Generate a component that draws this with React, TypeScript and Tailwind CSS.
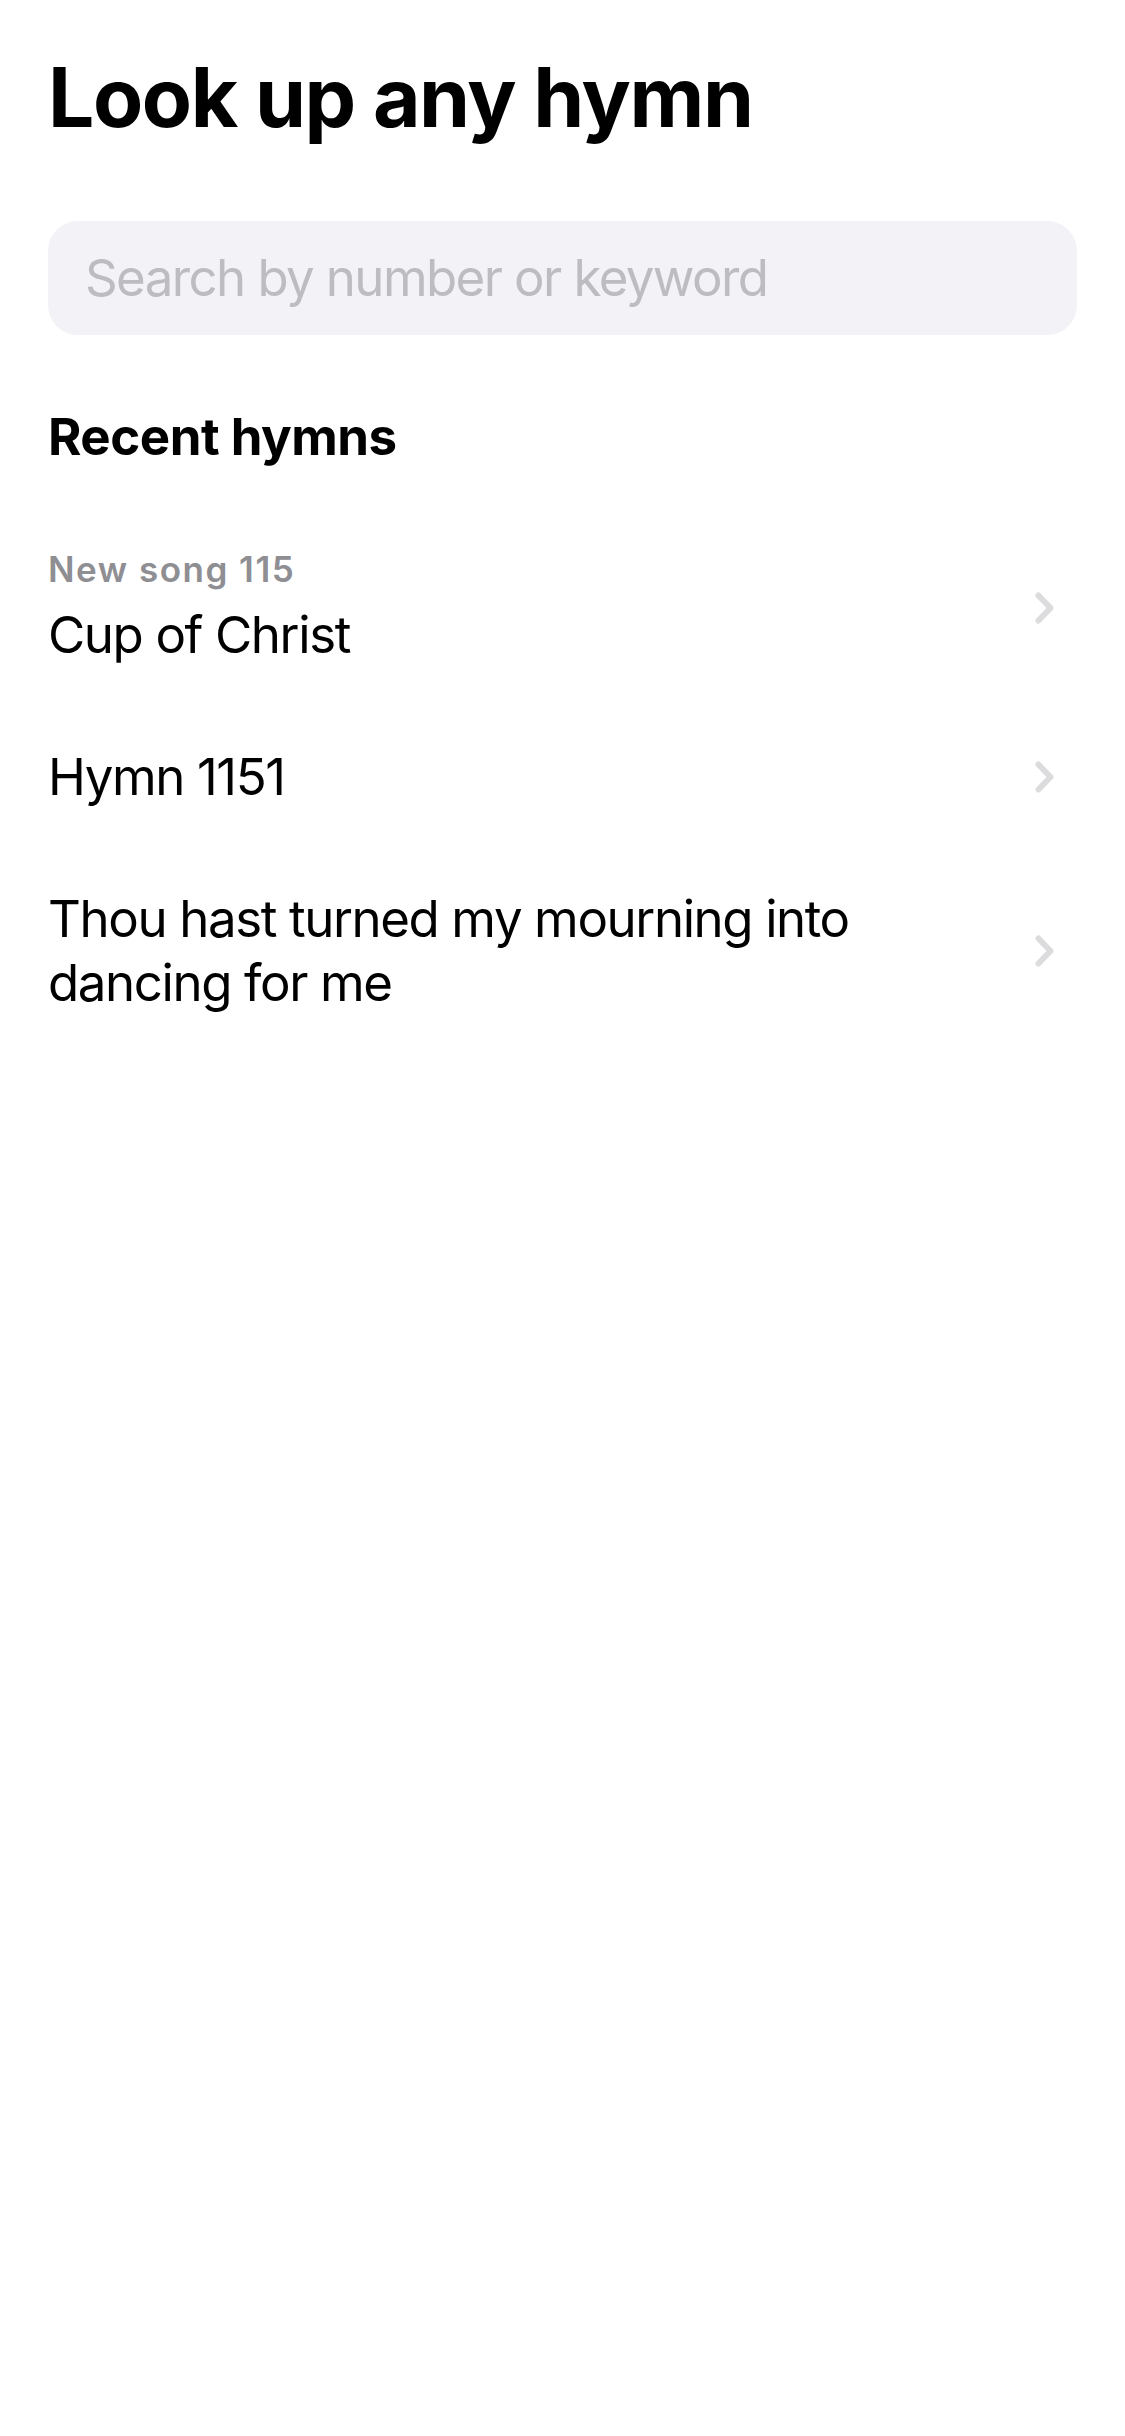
import React from 'react';

type Hymn = {
  id: string;
  label?: string;
  title: string;
};

const recent: Hymn[] = [
  { id: 'ns115', label: 'New song 115', title: 'Cup of Christ' },
  { id: 'h1151', title: 'Hymn 1151' },
  { id: 'ns-mourning', title: 'Thou hast turned my mourning into dancing for me' },
];

const Chevron = () => (
  <svg width="21" height="34" viewBox="0 0 21 34" fill="none" className="shrink-0">
    <path d="M4.5 4.5 L16.5 17 L4.5 29.5" stroke="#dcdcde" strokeWidth="6" strokeLinecap="round" strokeLinejoin="round" />
  </svg>
);

const HymnRow: React.FC<{ hymn: Hymn }> = ({ hymn }) => (
  <button className="flex w-full items-center py-[39px] pr-[22px] text-left">
    <div className="flex min-w-0 flex-1 flex-col gap-[13px] pr-[60px]">
      {hymn.label && (
        <span className="text-[35px] leading-[41px] font-semibold tracking-[1.5px] text-[#8e8e93]">{hymn.label}</span>
      )}
      <span className="text-[51px] leading-[64px] tracking-[-1.4px] text-black">{hymn.title}</span>
    </div>
    <Chevron />
  </button>
);

export default function App() {
  return (
    <div className="min-h-screen bg-white px-[48px] pt-[49px] font-['Inter','Noto_Sans',sans-serif]">
      <h1 className="text-[82px] leading-[98px] font-bold tracking-[-1.4px] text-black">Look up any hymn</h1>

      <div className="mt-[74px] flex h-[114px] items-center rounded-[30px] bg-[#f2f2f7] pl-[37px]">
        <input
          type="text"
          placeholder="Search by number or keyword"
          className="w-full bg-transparent text-[51px] tracking-[-1.6px] text-black outline-none placeholder:text-[#bcbcc1]"
        />
      </div>

      <h2 className="mt-[71px] text-[51px] leading-[62px] font-bold tracking-[-0.5px] text-black">Recent hymns</h2>

      <div className="mt-[42px] flex flex-col">
        {recent.map((h) => (
          <HymnRow key={h.id} hymn={h} />
        ))}
      </div>
    </div>
  );
}
